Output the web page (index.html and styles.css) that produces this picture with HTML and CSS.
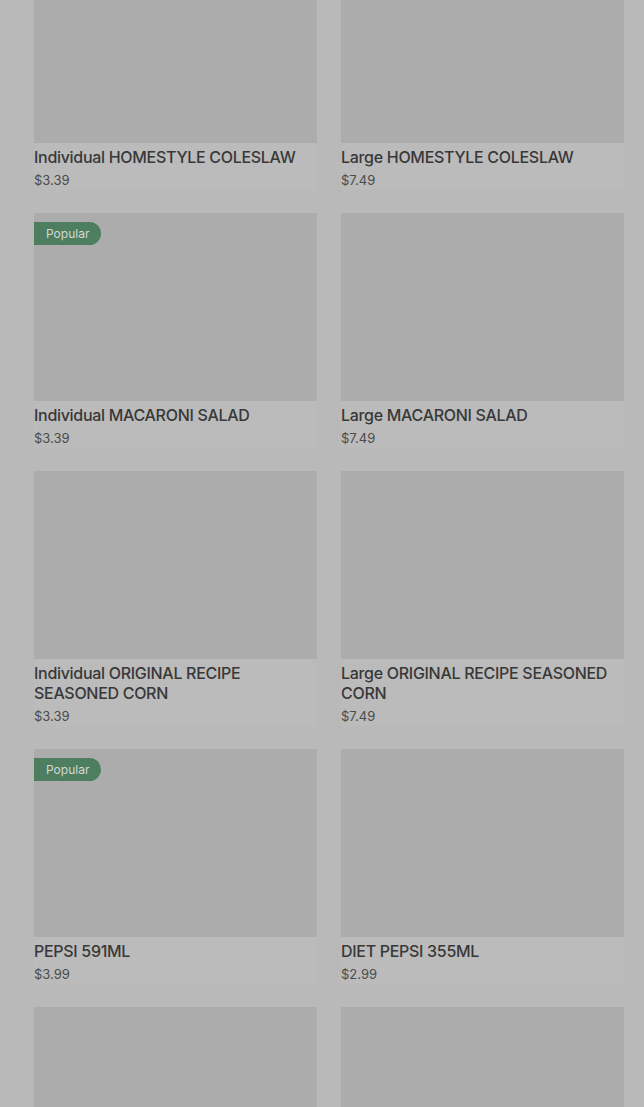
FILE: index.html
```html
<!DOCTYPE html>
<html>
<head>
  <title>Menu</title>
  <link rel="stylesheet" href="styles.css">
</head>
<body>
  <main class="menu">
    <div class="item">
      <div class="photo"></div>
      <div class="name">Individual HOMESTYLE COLESLAW</div>
      <div class="price">$3.39</div>
    </div>
    <div class="item">
      <div class="photo"></div>
      <div class="name">Large HOMESTYLE COLESLAW</div>
      <div class="price">$7.49</div>
    </div>

    <div class="item">
      <div class="photo"><span class="badge">Popular</span></div>
      <div class="name">Individual MACARONI SALAD</div>
      <div class="price">$3.39</div>
    </div>
    <div class="item">
      <div class="photo"></div>
      <div class="name">Large MACARONI SALAD</div>
      <div class="price">$7.49</div>
    </div>

    <div class="item">
      <div class="photo"></div>
      <div class="name">Individual ORIGINAL RECIPE SEASONED CORN</div>
      <div class="price">$3.39</div>
    </div>
    <div class="item">
      <div class="photo"></div>
      <div class="name">Large ORIGINAL RECIPE SEASONED CORN</div>
      <div class="price">$7.49</div>
    </div>

    <div class="item">
      <div class="photo"><span class="badge">Popular</span></div>
      <div class="name">PEPSI 591ML</div>
      <div class="price">$3.99</div>
    </div>
    <div class="item">
      <div class="photo"></div>
      <div class="name">DIET PEPSI 355ML</div>
      <div class="price">$2.99</div>
    </div>

    <div class="item">
      <div class="photo"></div>
      <div class="name">&nbsp;</div>
      <div class="price">&nbsp;</div>
    </div>
    <div class="item">
      <div class="photo"></div>
      <div class="name">&nbsp;</div>
      <div class="price">&nbsp;</div>
    </div>
  </main>
</body>
</html>
```

FILE: styles.css
```css
/* page is shown under a dim backdrop, so all colours are greyed */
body {
  margin: 0;
  background-color: #b9b9b9;
  font-family: Inter, "Noto Sans", Arial, sans-serif;
  overflow: hidden;
}

/* two column menu grid */
.menu {
  display: grid;
  grid-template-columns: 283px 283px;
  column-gap: 24px;
  row-gap: 23px;
  padding: 0 20px 0 34px;
  margin-top: -45px; /* page is scrolled a little */
}

.item {
  background-color: #bbbbbb;
}

.photo {
  position: relative;
  height: 188px;
  background-color: #acacac;
}

/* 人気ラベル */
.badge {
  position: absolute;
  top: 9px;
  left: 0;
  height: 23px;
  padding: 0 12px;
  border-radius: 0 12px 12px 0;
  background-color: #4d7e5f;
  color: #d4d8d5;
  font-size: 12px;
  line-height: 23px;
}

.name {
  padding-top: 4px;
  font-size: 16px;
  font-weight: 500;
  line-height: 20px;
  color: #383838;
  letter-spacing: -0.3px;
}

.price {
  margin-top: 3px;
  font-size: 13px;
  line-height: 20px;
  color: #4b4b4b;
}
```
